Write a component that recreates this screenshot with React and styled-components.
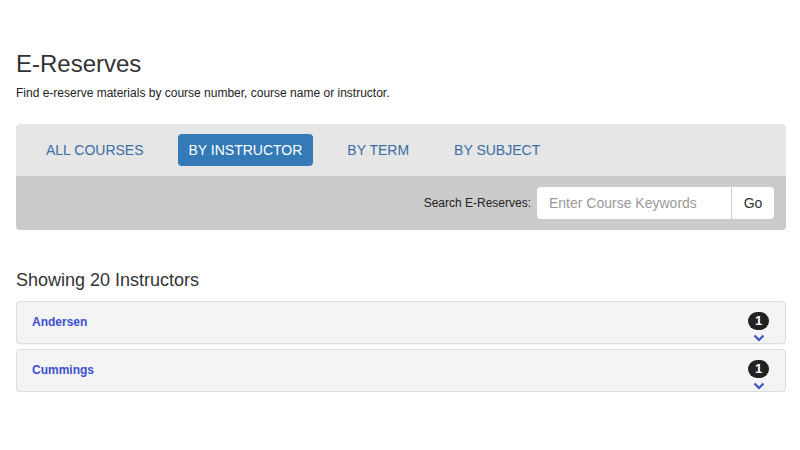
import React from 'react';
import styled, { createGlobalStyle } from 'styled-components';

const GlobalStyle = createGlobalStyle`
  body {
    margin: 0;
    background: #fff;
    font-family: "Liberation Sans", Arial, sans-serif;
    color: #333;
  }
`;

const Page = styled.div`
  padding: 50px 14px 0 16px;
`;

const Title = styled.h1`
  margin: 0;
  font-size: 24px;
  font-weight: 400;
  line-height: 28px;
  color: #333;
`;

const Intro = styled.p`
  margin: 7px 0 0;
  font-size: 12px;
  line-height: 16px;
  color: #222;
`;

const Panel = styled.div`
  margin-top: 23px;
  border-radius: 4px;
  overflow: hidden;
`;

const TabBar = styled.nav`
  display: flex;
  align-items: center;
  gap: 10px;
  height: 52px;
  padding: 0 19px;
  background: #e6e6e6;
`;

const Tab = styled.a`
  display: block;
  padding: 0 11px;
  height: 32px;
  line-height: 32px;
  border-radius: 4px;
  font-size: 14px;
  text-decoration: none;
  color: ${(p) => (p.$active ? '#fff' : '#3a6da3')};
  background: ${(p) => (p.$active ? '#337ab7' : 'transparent')};
  margin: 0 ${(p) => (p.$wide ? '13px' : '0')};
`;

const SearchBar = styled.form`
  display: flex;
  align-items: center;
  justify-content: flex-end;
  height: 54px;
  padding: 0 12px;
  background: #cbcbcb;
`;

const SearchLabel = styled.label`
  font-size: 12px;
  color: #222;
  margin-right: 6px;
`;

const SearchInput = styled.input`
  box-sizing: border-box;
  width: 194px;
  height: 32px;
  padding: 0 12px;
  border: none;
  border-radius: 4px 0 0 4px;
  font-family: "Liberation Sans", Arial, sans-serif;
  font-size: 14px;
  color: #555;
  outline: none;

  &::placeholder {
    color: #999;
  }
`;

const GoButton = styled.button`
  box-sizing: border-box;
  width: 43px;
  height: 32px;
  border: none;
  border-left: 1px solid #ccc;
  border-radius: 0 4px 4px 0;
  background: #fff;
  font-family: "Liberation Sans", Arial, sans-serif;
  font-size: 14px;
  color: #333;
`;

const Count = styled.h2`
  margin: 39px 0 0;
  font-size: 18px;
  font-weight: 400;
  line-height: 22px;
  color: #333;
`;

const List = styled.div`
  display: flex;
  flex-direction: column;
  gap: 5px;
  margin-top: 10px;
`;

const Row = styled.div`
  display: flex;
  align-items: center;
  justify-content: space-between;
  box-sizing: border-box;
  height: 43px;
  padding: 0 16px 0 15px;
  background: #f4f4f4;
  border: 1px solid #ddd;
  border-radius: 4px;
  box-shadow: 0 1px 1px rgba(0, 0, 0, 0.05);
`;

const Name = styled.a`
  font-size: 12px;
  font-weight: 700;
  color: #3b4fd1;
  text-decoration: none;
  margin-top: -1px;
`;

const Meta = styled.div`
  display: flex;
  flex-direction: column;
  align-items: center;
  padding-top: 9px;
`;

const Badge = styled.span`
  display: block;
  min-width: 21px;
  box-sizing: border-box;
  padding: 0 6px;
  height: 18px;
  line-height: 18px;
  border-radius: 9px;
  background: #222;
  color: #fff;
  font-size: 13px;
  font-weight: 700;
  text-align: center;
`;

const Chevron = () => (
  <svg width="12" height="8" viewBox="0 0 12 8" style={{ marginTop: 4 }}>
    <path d="M1.5 1.5 L6 6 L10.5 1.5" fill="none" stroke="#3b4fd1" strokeWidth="2.2" />
  </svg>
);

const instructors = [
  { name: 'Andersen', count: 1 },
  { name: 'Cummings', count: 1 },
];

const App = () => (
  <>
    <GlobalStyle />
    <Page>
      <Title>E-Reserves</Title>
      <Intro>Find e-reserve materials by course number, course name or instructor.</Intro>
      <Panel>
        <TabBar>
          <Tab href="#">ALL COURSES</Tab>
          <Tab href="#" $active $wide>BY INSTRUCTOR</Tab>
          <Tab href="#">BY TERM</Tab>
          <Tab href="#" $wide>BY SUBJECT</Tab>
        </TabBar>
        <SearchBar onSubmit={(e) => e.preventDefault()}>
          <SearchLabel htmlFor="q">Search E-Reserves:</SearchLabel>
          <SearchInput id="q" placeholder="Enter Course Keywords" />
          <GoButton type="submit">Go</GoButton>
        </SearchBar>
      </Panel>
      <Count>Showing 20 Instructors</Count>
      <List>
        {instructors.map((i) => (
          <Row key={i.name}>
            <Name href="#">{i.name}</Name>
            <Meta>
              <Badge>{i.count}</Badge>
              <Chevron />
            </Meta>
          </Row>
        ))}
      </List>
    </Page>
  </>
);

export default App;
